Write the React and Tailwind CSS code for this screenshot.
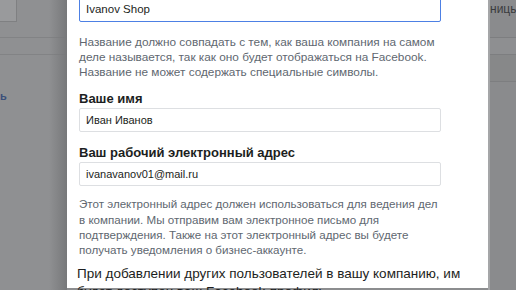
import React from 'react';

export default function App() {
    return (
        <div className="w-[516px] h-[290px] overflow-hidden flex bg-[#8c8d8f] font-['Helvetica','Liberation_Sans',sans-serif]">
            {/* Затемнённый фон слева */}
            <div className="w-[67px] shrink-0 h-full relative bg-[#8f9092]">
                <div className="w-[17px] h-[22px] bg-[#999a9c] border-r border-b border-[#7f8082]"></div>
                <div className="h-[16px] border-b border-[#828385]"></div>
                <div className="h-[17px] border-b border-[#828385]"></div>
                <div className="pt-[36px] text-[11px] leading-none text-[#3b4f7a] font-bold">ь</div>
                <div className="absolute right-0 top-0 h-full w-[18px] bg-gradient-to-r from-transparent to-[#77787a]"></div>
            </div>

            {/* Модальное окно */}
            <div className="w-[421px] shrink-0 h-full bg-white px-[12px] -mt-[2px]">
                <div className="w-[362px] h-[24px] border border-[#4d80e4] rounded-[2px] px-[6px] flex items-center text-[11.5px] text-[#1c1e21]">Ivanov Shop</div>
                <p className="mt-[12.5px] text-[11.8px] leading-[15px] text-[#606770] whitespace-nowrap">
                    Название должно совпадать с тем, как ваша компания на самом<br />
                    деле называется, так как оно будет отображаться на Facebook.<br />
                    Название не может содержать специальные символы.
                </p>

                <div className="mt-[11px] text-[13px] leading-[15px] font-bold text-[#1c1e21]">Ваше имя</div>
                <div className="mt-[2.5px] w-[362px] h-[24px] border border-[#dddfe2] rounded-[2px] px-[6px] flex items-center text-[11px] text-[#1c1e21]">Иван Иванов</div>

                <div className="mt-[12.5px] text-[13px] leading-[15px] font-bold text-[#1c1e21]">Ваш рабочий электронный адрес</div>
                <div className="mt-[2.5px] w-[362px] h-[24px] border border-[#dddfe2] rounded-[2px] px-[6px] flex items-center text-[11px] text-[#1c1e21]">ivanavanov01@mail.ru</div>
                <p className="mt-[10.3px] text-[11.6px] leading-[15.3px] text-[#606770] whitespace-nowrap">
                    Этот электронный адрес должен использоваться для ведения дел<br />
                    в компании. Мы отправим вам электронное письмо для<br />
                    подтверждения. Также на этот электронный адрес вы будете<br />
                    получать уведомления о бизнес-аккаунте.
                </p>
                <p className="mt-[7.5px] -ml-[2px] text-[13.5px] leading-[18px] text-[#1c1e21] whitespace-nowrap">
                    При добавлении других пользователей в вашу компанию, им<br />
                    будет доступен ваш Facebook-профиль.
                </p>
            </div>

            {/* Фон справа */}
            <div className="flex-1 h-full border-l-[2px] border-[#a5a6a8] bg-[#8a8b8d]">
                <div className="h-[22px] pt-[2px] text-[12px] leading-[15px] text-[#3a3b3d] whitespace-nowrap">ницы:</div>
                <div className="h-[16px] border-b border-[#7d7e80]"></div>
                <div className="h-[17px] border-b border-[#7d7e80] bg-[#8e8f91]"></div>
                <div className="h-[27px] border-b border-[#7d7e80] bg-[#878889]"></div>
            </div>
        </div>
    );
}
